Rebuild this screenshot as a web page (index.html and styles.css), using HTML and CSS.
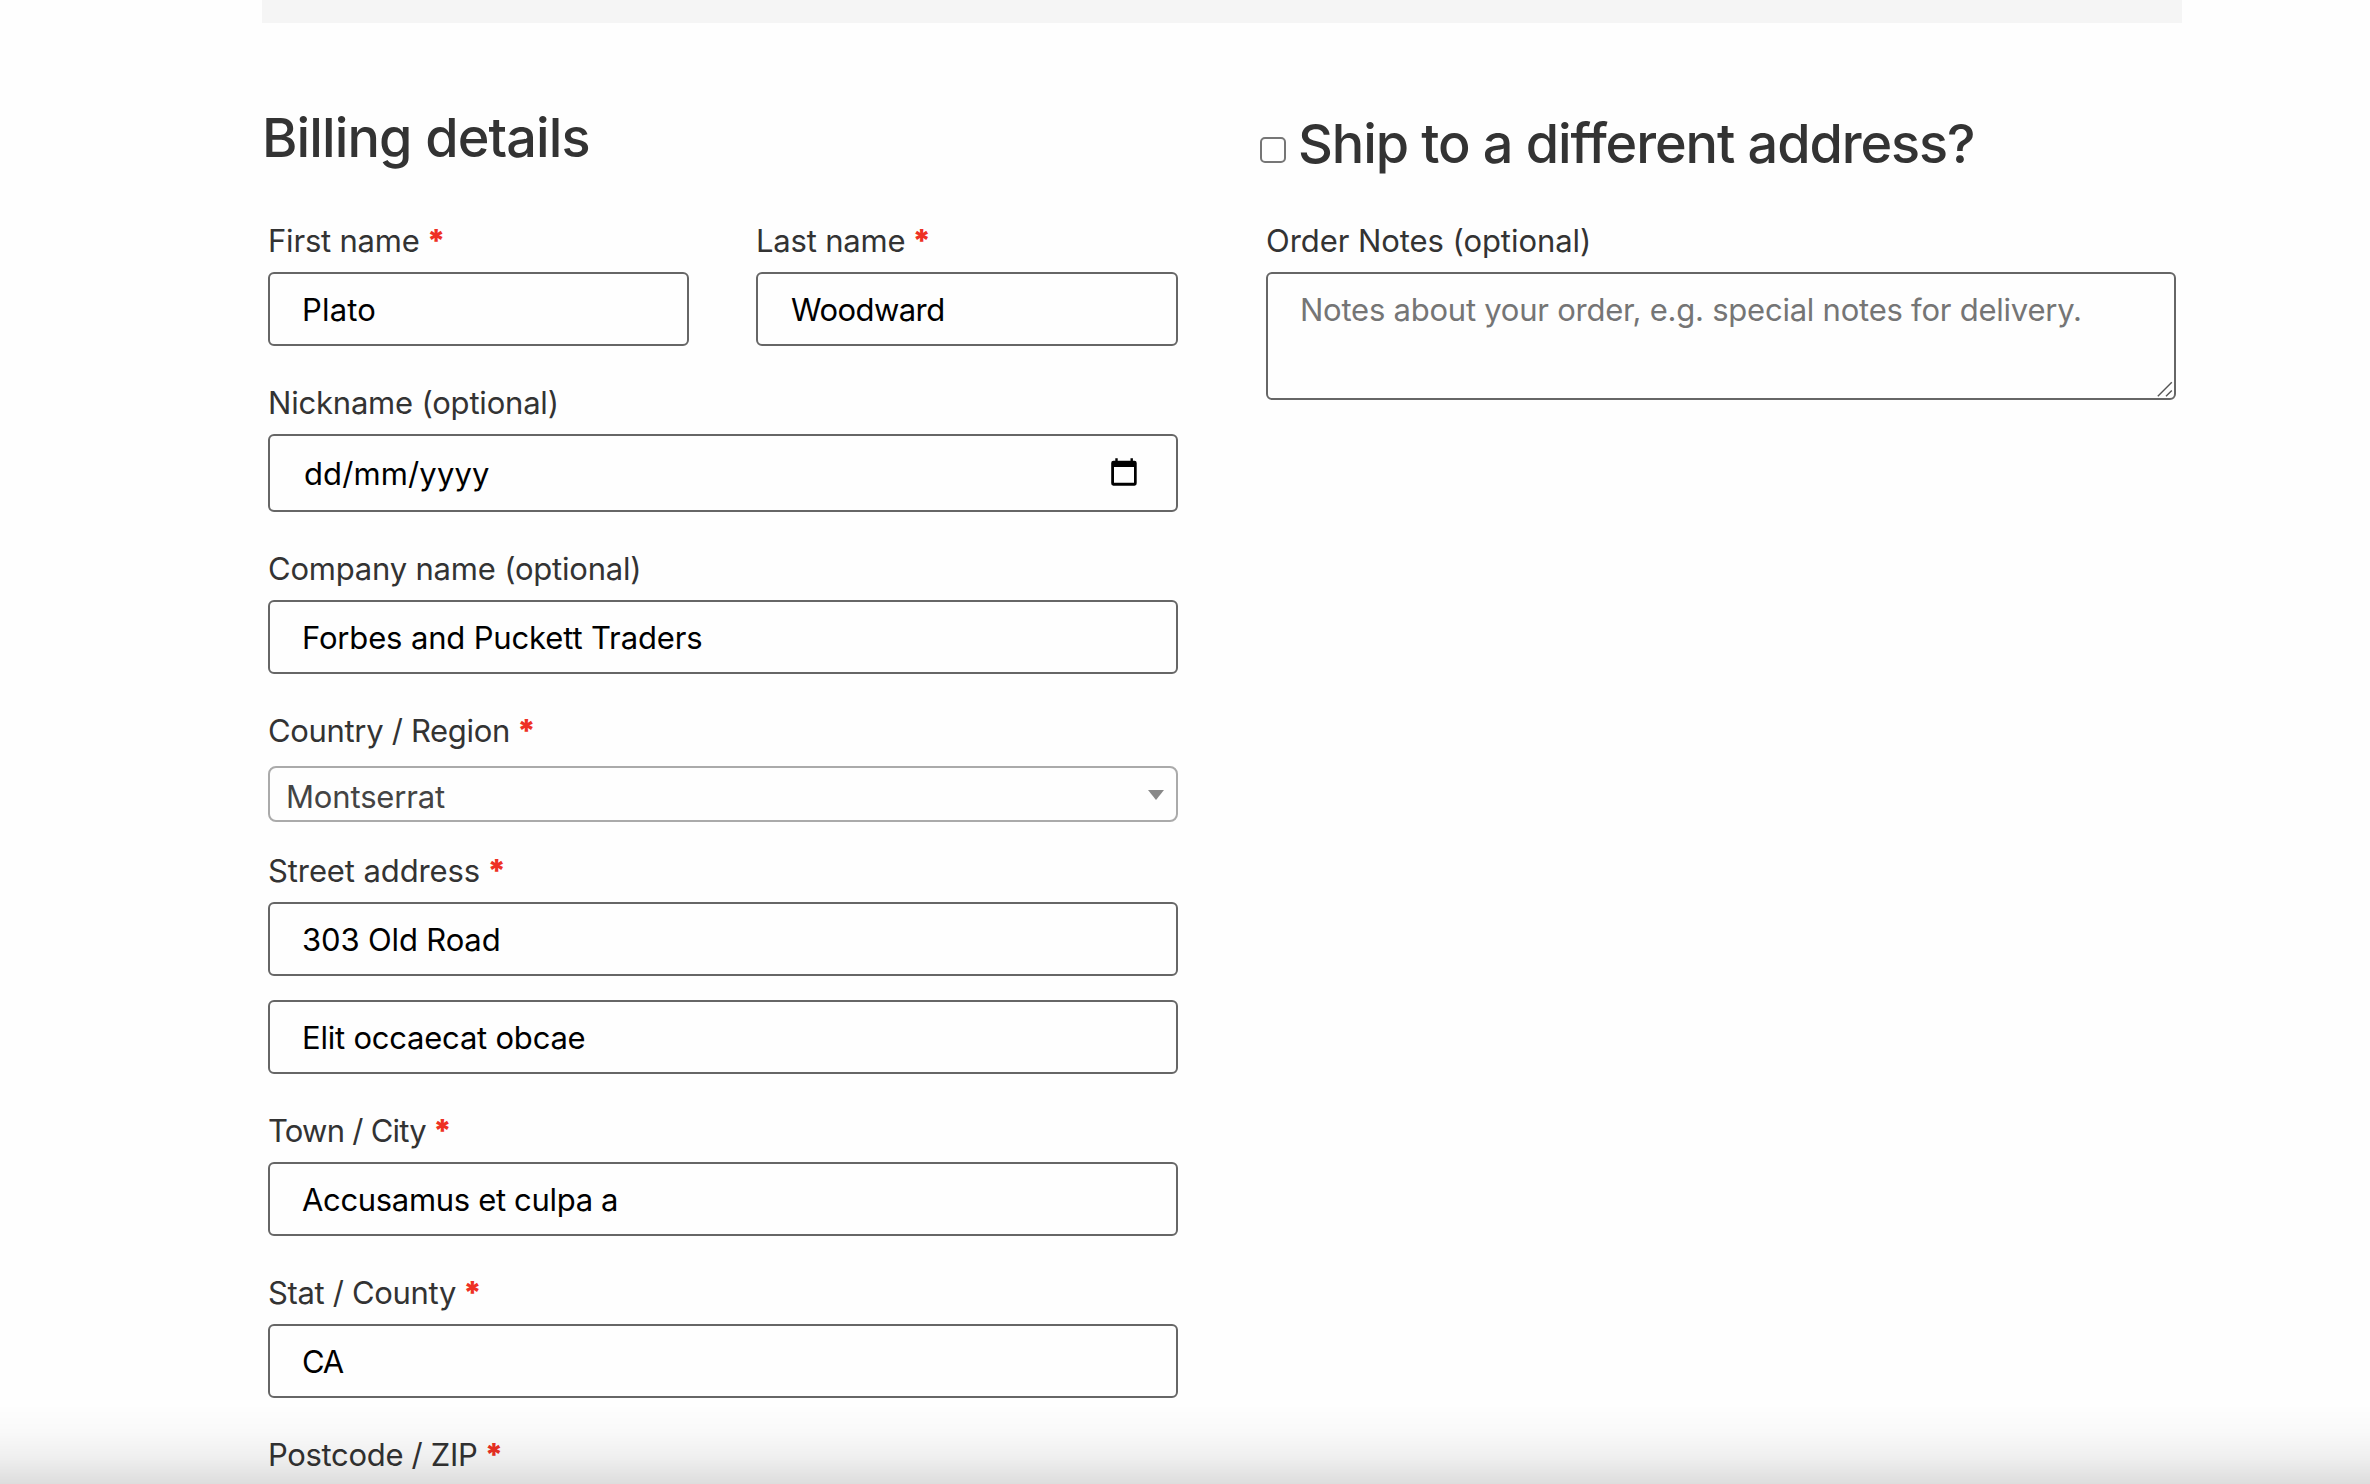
FILE: index.html
```html
<!DOCTYPE html>
<html lang="en">
<head>
<meta charset="utf-8">
<title>Checkout</title>
<link rel="stylesheet" href="styles.css">
</head>
<body>
<main class="page">
  <div class="notice-bar"></div>
  <form class="checkout">
    <section class="column">
      <h3 class="heading">Billing details</h3>
      <div class="fields">
        <div class="name-row">
          <div class="field">
            <label class="label" for="first-name">First name<span class="required">*</span></label>
            <input class="input input--loose" id="first-name" type="text" value="Plato">
          </div>
          <div class="field">
            <label class="label" for="last-name">Last name<span class="required">*</span></label>
            <input class="input input--name" id="last-name" type="text" value="Woodward">
          </div>
        </div>
        <div class="field">
          <label class="label">Nickname (optional)</label>
          <div class="input input--date">
            <span>dd/mm/yyyy</span>
            <svg class="calendar" viewBox="0 0 32 32" aria-hidden="true">
              <path fill-rule="evenodd" d="M7.3 2.3h2.4v2.4h12.8V2.3h2.4v2.4h1.4a2.3 2.3 0 0 1 2.4 2.3v20.3a2.3 2.3 0 0 1-2.4 2.4H5.6a2.3 2.3 0 0 1-2.4-2.4V7a2.3 2.3 0 0 1 2.4-2.3h1.7zM6 11v15.8h20V11z"/>
            </svg>
          </div>
        </div>
        <div class="field">
          <label class="label" for="company">Company name (optional)</label>
          <input class="input" id="company" type="text" value="Forbes and Puckett Traders">
        </div>
        <div class="field">
          <label class="label label--slash">Country / Region<span class="required">*</span></label>
          <div class="select"><span>Montserrat</span><span class="select-arrow"></span></div>
        </div>
        <div class="field field--after-select">
          <label class="label label--street" for="street">Street address<span class="required">*</span></label>
          <input class="input" id="street" type="text" value="303 Old Road">
          <input class="input input--second" type="text" value="Elit occaecat obcae">
        </div>
        <div class="field">
          <label class="label label--town" for="town">Town / City<span class="required">*</span></label>
          <input class="input input--town" id="town" type="text" value="Accusamus et culpa a">
        </div>
        <div class="field">
          <label class="label label--slash" for="county">Stat / County<span class="required">*</span></label>
          <input class="input input--code" id="county" type="text" value="CA">
        </div>
        <div class="field">
          <label class="label label--slash label--last">Postcode / ZIP<span class="required">*</span></label>
        </div>
      </div>
    </section>
    <section class="column">
      <h3 class="heading heading--ship">
        <input class="checkbox" type="checkbox" id="ship">
        <label for="ship">Ship to a different address?</label>
      </h3>
      <div class="fields">
        <div class="field">
          <label class="label label--notes" for="notes">Order Notes (optional)</label>
          <div class="notes-box">
            <textarea class="notes" id="notes" placeholder="Notes about your order, e.g. special notes for delivery."></textarea>
            <svg class="grip" viewBox="0 0 16 16" aria-hidden="true"><path d="M.8 15.2 14.8 1.2M9 15.2l5.8-5.8"/></svg>
          </div>
        </div>
      </div>
    </section>
  </form>
</main>
<div class="bottom-shade"></div>
</body>
</html>
```
FILE: styles.css
```css
* { box-sizing: border-box; }

body {
  margin: 0;
  height: 1484px;
  overflow: hidden;
  background: #fefefe;
  color: #333;
  font: 400 31px "Inter", sans-serif;
}

.page { width: 1920px; margin-left: 262px; }

.notice-bar { height: 23px; background: #f5f5f5; }

.checkout {
  display: grid;
  grid-template-columns: 922px 922px;
  column-gap: 76px;
}

.heading {
  display: flex;
  align-items: center;
  height: 187px;
  margin: 0;
  padding: 83px 0 40px;
  font-size: 54px;
  font-weight: 500;
  line-height: 64px;
  letter-spacing: -0.88px;
  white-space: nowrap;
}

.heading--ship {
  gap: 12px;
  padding: 89px 0 34px;
  letter-spacing: -1.1px;
}

.checkbox {
  appearance: none;
  width: 26px;
  height: 26px;
  margin: 11px 0 0;
  border: 2px solid #767676;
  border-radius: 5px;
  background: #fff;
}

.fields {
  display: flex;
  flex-direction: column;
  gap: 26px;
  padding: 0 6px;
}

.name-row {
  display: grid;
  grid-template-columns: 421px 422px;
  column-gap: 67px;
}

.field { display: flex; flex-direction: column; }
.field--after-select { margin-top: -8px; }

.label {
  display: block;
  height: 62px;
  line-height: 62px;
  letter-spacing: -0.2px;
  white-space: nowrap;
}

.label--slash { letter-spacing: -0.33px; }
.label--street { letter-spacing: -0.1px; }
.label--town { letter-spacing: -0.75px; }
.label--notes { letter-spacing: -0.06px; }
.label--last { height: 60px; }

.required {
  margin-left: 7px;
  color: #ee3124;
  font-size: 31px;
  font-weight: 900;
  letter-spacing: 0;
}

.input {
  width: 100%;
  height: 74px;
  margin: 0;
  padding: 0 32px;
  border: 2px solid #666;
  border-radius: 6px;
  outline: 0;
  background: #fefefe;
  color: #000;
  font: inherit;
  letter-spacing: -0.15px;
}

.input--loose { letter-spacing: 0.2px; }
.input--name { padding-left: 33px; letter-spacing: -0.55px; }
.input--town { letter-spacing: -0.33px; }
.input--code { letter-spacing: -1.3px; }
.input--second { margin-top: 24px; letter-spacing: -0.22px; }

.input--date {
  display: flex;
  align-items: center;
  justify-content: space-between;
  height: 78px;
  padding: 0 36px 0 34px;
  letter-spacing: 0.12px;
}

.calendar { width: 32px; height: 32px; margin-top: -2px; fill: #000; }

.select {
  display: flex;
  align-items: center;
  justify-content: space-between;
  height: 56px;
  margin-top: 4px;
  padding: 4px 12px 0 16px;
  border: 2px solid #aaa;
  border-radius: 8px;
  color: #444;
  letter-spacing: -0.15px;
}

.select-arrow {
  margin-top: -3px;
  border: solid transparent;
  border-width: 10px 8px 0;
  border-top-color: #888;
}

.notes-box { position: relative; height: 128px; }

.notes {
  display: block;
  width: 100%;
  height: 100%;
  padding: 17px 32px;
  border: 2px solid #666;
  border-radius: 6px;
  outline: 0;
  background: #fefefe;
  font: inherit;
  letter-spacing: -0.236px;
  resize: none;
}

.notes::placeholder { color: #757575; }

.grip {
  position: absolute;
  right: 3px;
  bottom: 3px;
  width: 16px;
  height: 16px;
  fill: none;
  stroke: #555;
  stroke-width: 1.4;
}

.bottom-shade {
  position: fixed;
  inset: auto 0 0;
  height: 80px;
  background: linear-gradient(rgba(0, 0, 0, 0), rgba(0, 0, 0, 0.02) 35%, rgba(0, 0, 0, 0.06) 67%, rgba(0, 0, 0, 0.13));
  pointer-events: none;
}
```
